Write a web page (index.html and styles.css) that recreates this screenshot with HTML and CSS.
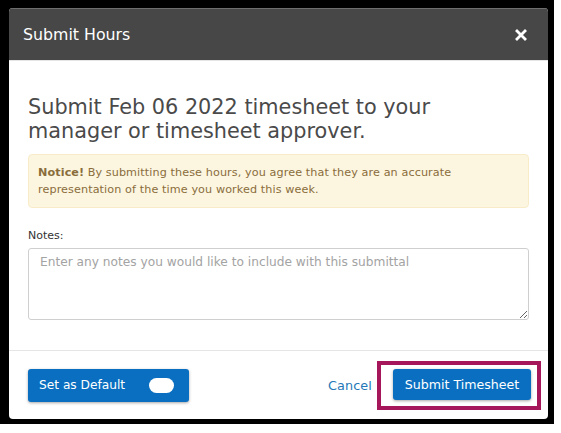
FILE: index.html
```html
<!DOCTYPE html>
<html lang="en">
<head>
<meta charset="utf-8">
<title>Submit Hours</title>
<link rel="stylesheet" href="styles.css">
</head>
<body>
<div class="backdrop">
  <div class="modal">
    <div class="modal-header">
      <h4 class="modal-title">Submit Hours</h4>
      <button class="close" type="button" aria-label="Close">
        <svg width="12" height="12" viewBox="0 0 12 12"><path d="M2 2 L10 10 M10 2 L2 10" stroke="#fff" stroke-width="2.8" stroke-linecap="square"/></svg>
      </button>
    </div>
    <div class="modal-body">
      <h2 class="lead">Submit Feb 06 2022 timesheet to your manager or timesheet approver.</h2>
      <p class="alert"><strong class="alert-strong">Notice!</strong><span class="alert-text">By submitting these hours, you agree that they are an accurate representation of the time you worked this week.</span></p>
      <label class="notes-label" for="notes">Notes:</label>
      <textarea id="notes" class="notes" placeholder="Enter any notes you would like to include with this submittal"></textarea>
    </div>
    <div class="modal-footer">
      <button class="btn btn-default-toggle" type="button">Set as Default <span class="toggle"></span></button>
      <div class="actions">
        <a class="cancel" href="#">Cancel</a>
        <div class="highlight">
          <button class="btn btn-submit" type="button">Submit Timesheet</button>
        </div>
      </div>
    </div>
  </div>
</div>
</body>
</html>
```

FILE: styles.css
```css
* { box-sizing: border-box; }
html, body { margin: 0; padding: 0; background: #fff; }
body { font-family: "DejaVu Sans", "Open Sans", sans-serif; }

.backdrop {
  width: 554px;
  height: 424px;
  background: #000;
  padding: 8px 6px 5px 9px;
}

.modal {
  width: 539px;
  height: 411px;
  background: #fff;
  border-radius: 4px;
  overflow: hidden;
  display: flex;
  flex-direction: column;
}

.modal-header {
  height: 53px;
  background: #474747;
  border-top: 1px solid #6e6e6e;
  border-bottom: 1px solid #e5e5e5;
  display: flex;
  align-items: center;
  justify-content: space-between;
  padding: 0 21px 0 14px;
}
.modal-title {
  margin: 0;
  color: #fff;
  font-size: 15.8px;
  font-weight: 500;
}
.close {
  background: none;
  border: 0;
  padding: 0;
  display: flex;
  width: 12px;
  height: 12px;
}

.modal-body {
  padding: 34px 19px 0 19px;
  flex: 1;
  border-bottom: 1px solid #e5e5e5;
}
.lead {
  margin: 0 0 11px 0;
  max-width: 470px;
  font-size: 20.8px;
  font-weight: 400;
  line-height: 24px;
  color: #4a4a4a;
}
.alert {
  margin: 0;
  background: #fcf6e1;
  border: 1px solid #f8ebc8;
  border-radius: 4px;
  color: #8a6d3b;
  font-size: 11.2px;
  letter-spacing: 0.1px;
  line-height: 17px;
  padding: 9px 9px;
  height: 54px;
}
.alert-strong { font-weight: 700; margin-right: 0.3em; }

.notes-label {
  display: block;
  margin-top: 21px;
  font-size: 11px;
  color: #333;
  font-weight: 500;
}
.notes {
  display: block;
  margin-top: 6px;
  width: 100%;
  height: 72px;
  border: 1px solid #cfcfcf;
  border-radius: 3px;
  padding: 6px 11px;
  font-family: inherit;
  font-size: 12.2px;
  color: #555;
  resize: vertical;
}
.notes::placeholder { color: #a3a3a3; }

.modal-footer {
  height: 68px;
  display: flex;
  align-items: center;
  justify-content: space-between;
  padding: 0 7px 0 19px;
}
.btn {
  border: 0;
  border-radius: 3px;
  background: #0a6fc0;
  color: #fff;
  font-family: inherit;
  font-weight: 500;
  box-shadow: 0 1px 3px rgba(0,0,0,0.35);
}
.btn-default-toggle {
  width: 161px;
  height: 33px;
  font-size: 12.2px;
  display: flex;
  align-items: center;
  justify-content: space-between;
  padding: 0 15px 0 11px;
}
.toggle {
  display: block;
  width: 25px;
  height: 15px;
  border-radius: 8px;
  background: #fff;
}
.actions {
  display: flex;
  align-items: center;
  gap: 4px;
}
.cancel {
  color: #2578b8;
  text-decoration: none;
  font-size: 12.8px;
  letter-spacing: 0.1px;
  margin-right: 0;
}
.highlight {
  border: 4px solid #a5175a;
  padding: 4px 6px 6px 12px;
  margin-left: 1px;
}
.btn-submit {
  display: block;
  width: 138px;
  height: 31px;
  font-size: 12.6px;
}
```
